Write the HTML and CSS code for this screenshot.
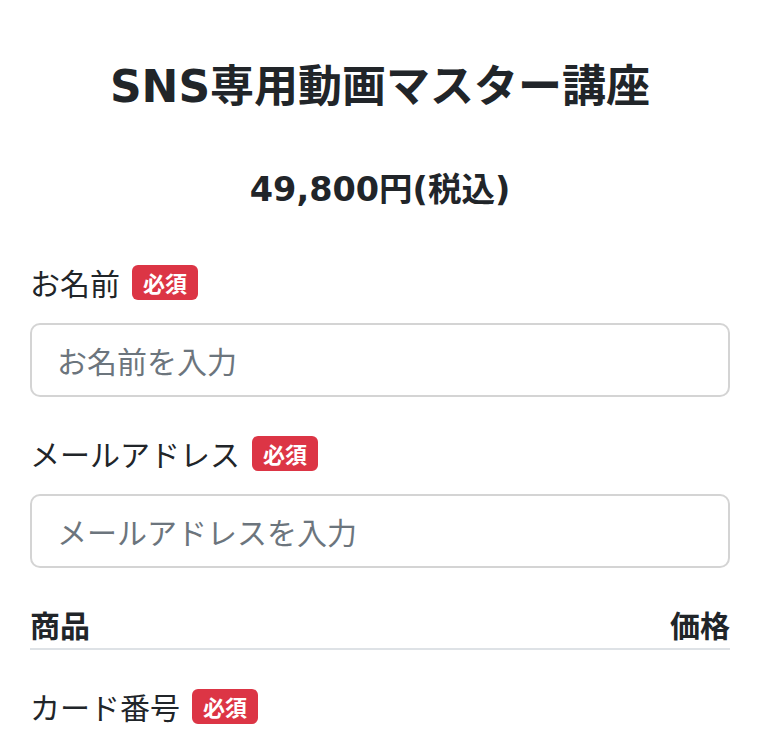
FILE: index.html
```html
<!DOCTYPE html>
<html lang="ja">
<head>
<meta charset="utf-8">
<title>SNS専用動画マスター講座</title>
<link rel="stylesheet" href="styles.css">
</head>
<body>
<main class="page">
  <h1 class="title">SNS専用動画マスター講座</h1>
  <p class="price">49,800円(税込)</p>

  <div class="field">
    <div class="label-row">
      <span class="label">お名前</span>
      <span class="badge">必須</span>
    </div>
    <input class="input" type="text" placeholder="お名前を入力">
  </div>

  <div class="field">
    <div class="label-row">
      <span class="label">メールアドレス</span>
      <span class="badge">必須</span>
    </div>
    <input class="input" type="email" placeholder="メールアドレスを入力">
  </div>

  <div class="table-head">
    <span>商品</span>
    <span>価格</span>
  </div>

  <div class="field card-field">
    <div class="label-row">
      <span class="label">カード番号</span>
      <span class="badge">必須</span>
    </div>
  </div>
</main>
</body>
</html>
```

FILE: styles.css
```css
html, body {
  margin: 0;
  padding: 0;
  background: #ffffff;
}

body {
  font-family: "DejaVu Sans", "Noto Sans CJK JP", sans-serif;
  color: #212529;
}

.page {
  padding: 62px 30px 0;
}

.title {
  margin: 0 0 58px;
  font-size: 44px;
  line-height: 50px;
  font-weight: 700;
  text-align: center;
}

.price {
  margin: 0 0 55px;
  font-size: 33.5px;
  line-height: 40px;
  font-weight: 700;
  text-align: center;
}

.field {
  margin-bottom: 39px;
}

.label-row {
  display: flex;
  align-items: center;
  gap: 12px;
  height: 35px;
  margin-bottom: 23px;
}

.label {
  font-family: "Noto Sans CJK JP", sans-serif;
  font-size: 30px;
  line-height: 35px;
}

.badge {
  font-family: "Noto Sans CJK JP", sans-serif;
  background: #dc3545;
  color: #ffffff;
  font-size: 22px;
  font-weight: 700;
  line-height: 25px;
  padding: 5px 11px;
  border-radius: 6px;
}

.input {
  display: block;
  width: 100%;
  box-sizing: border-box;
  height: 74px;
  margin: 0;
  padding: 0 25px;
  border: 2px solid #d4d4d4;
  border-radius: 10px;
  font-family: "Noto Sans CJK JP", sans-serif;
  font-size: 30px;
  color: #212529;
  background: #ffffff;
  outline: none;
}

.input::placeholder {
  color: #6c757d;
  opacity: 1;
}

.table-head {
  display: flex;
  justify-content: space-between;
  font-family: "Noto Sans CJK JP", sans-serif;
  font-size: 30px;
  line-height: 34px;
  font-weight: 700;
  padding-bottom: 7px;
  border-bottom: 2px solid #dee2e6;
}

.card-field {
  margin-top: 39px;
}

.card-field .label-row {
  margin-bottom: 0;
}
```
